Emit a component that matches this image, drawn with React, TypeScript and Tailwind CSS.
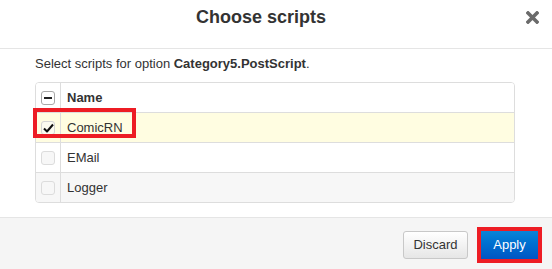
import React from "react";

function Box({ state }: { state: "minus" | "checked" | "none" }) {
  if (state === "minus") {
    return (
      <div className="w-[14px] h-[14px] rounded-[3px] border border-[#a8a8a8] bg-white flex items-center justify-center">
        <div className="w-[8px] h-[2px] bg-[#222]" />
      </div>
    );
  }
  if (state === "checked") {
    return (
      <div className="w-[14px] h-[14px] rounded-[3px] border border-[#d4d4d4] bg-[#fbfbf0] flex items-center justify-center">
        <svg width="11" height="10" viewBox="0 0 11 10">
          <path d="M1 5.5 L4 8.5 L10 1.5" fill="none" stroke="#111" strokeWidth="2" strokeLinejoin="round" />
        </svg>
      </div>
    );
  }
  return <div className="w-[14px] h-[14px] rounded-[3px] border border-[#dcdcdc] bg-[#f7f7f7]" />;
}

function Row({
  label,
  state,
  bg,
  bold,
}: {
  label: string;
  state: "minus" | "checked" | "none";
  bg: string;
  bold?: boolean;
}) {
  return (
    <div className={`flex h-[30px] border-b border-[#dddddd] last:border-b-0 last:h-[29px] ${bg}`}>
      <div className="w-[25px] border-r border-[#dddddd] flex items-center justify-center">
        <Box state={state} />
      </div>
      <div className={`flex-1 flex items-center pl-[6px] text-[13px] text-[#333] ${bold ? "font-bold" : ""}`}>
        {label}
      </div>
    </div>
  );
}

export default function App() {
  return (
    <div
      className="relative w-[552px] h-[269px] bg-white overflow-hidden"
      style={{ fontFamily: '"Liberation Sans", Arial, sans-serif' }}
    >
      <div className="h-[49px] border-b border-[#e5e5e5] flex items-start pr-[8px]">
        <div className="flex-1 text-center text-[18px] leading-[20px] font-bold text-[#333] pt-[7px] pl-[2px]">
          Choose scripts
        </div>
        <div className="w-[24px] h-[24px] mt-[5px] flex items-center justify-center">
          <svg width="13" height="13" viewBox="0 0 13 13">
            <path d="M2 2 L11 11 M11 2 L2 11" stroke="#6b6b6b" strokeWidth="3.6" strokeLinecap="square" />
          </svg>
        </div>
      </div>
      <div className="px-[35px] pt-[7px] pb-[14px]">
        <div className="text-[13px] leading-[16px] text-[#333] mb-[10px]">
          Select scripts for option <span className="font-bold">Category5.PostScript</span>.
        </div>
        <div className="w-[480px] border border-[#dddddd] rounded-[4px] overflow-hidden">
          <Row label="Name" state="minus" bg="bg-white" bold />
          <Row label="ComicRN" state="checked" bg="bg-[#fffde1]" />
          <Row label="EMail" state="none" bg="bg-white" />
          <Row label="Logger" state="none" bg="bg-[#f7f7f7]" />
        </div>
      </div>
      <div className="border-t border-[#e5e5e5] bg-[#f5f5f5] h-[52px] flex items-center justify-end pr-[10px] gap-[9px]">
        <button className="h-[28px] w-[65px] rounded-[3px] border border-[#c8c8c8] bg-gradient-to-b from-white to-[#e6e6e6] text-[13px] text-[#333] mt-[2px]">
          Discard
        </button>
        <div className="border-4 border-[#ed1c24] mt-[2px] flex">
          <button className="h-[28px] w-[57px] bg-gradient-to-b from-[#0a84d8] to-[#0055c4] text-[13px] text-white">
            Apply
          </button>
        </div>
      </div>
      <div className="absolute left-[33px] top-[108px] w-[103px] h-[30px] border-4 border-[#ed1c24] pointer-events-none" />
    </div>
  );
}
